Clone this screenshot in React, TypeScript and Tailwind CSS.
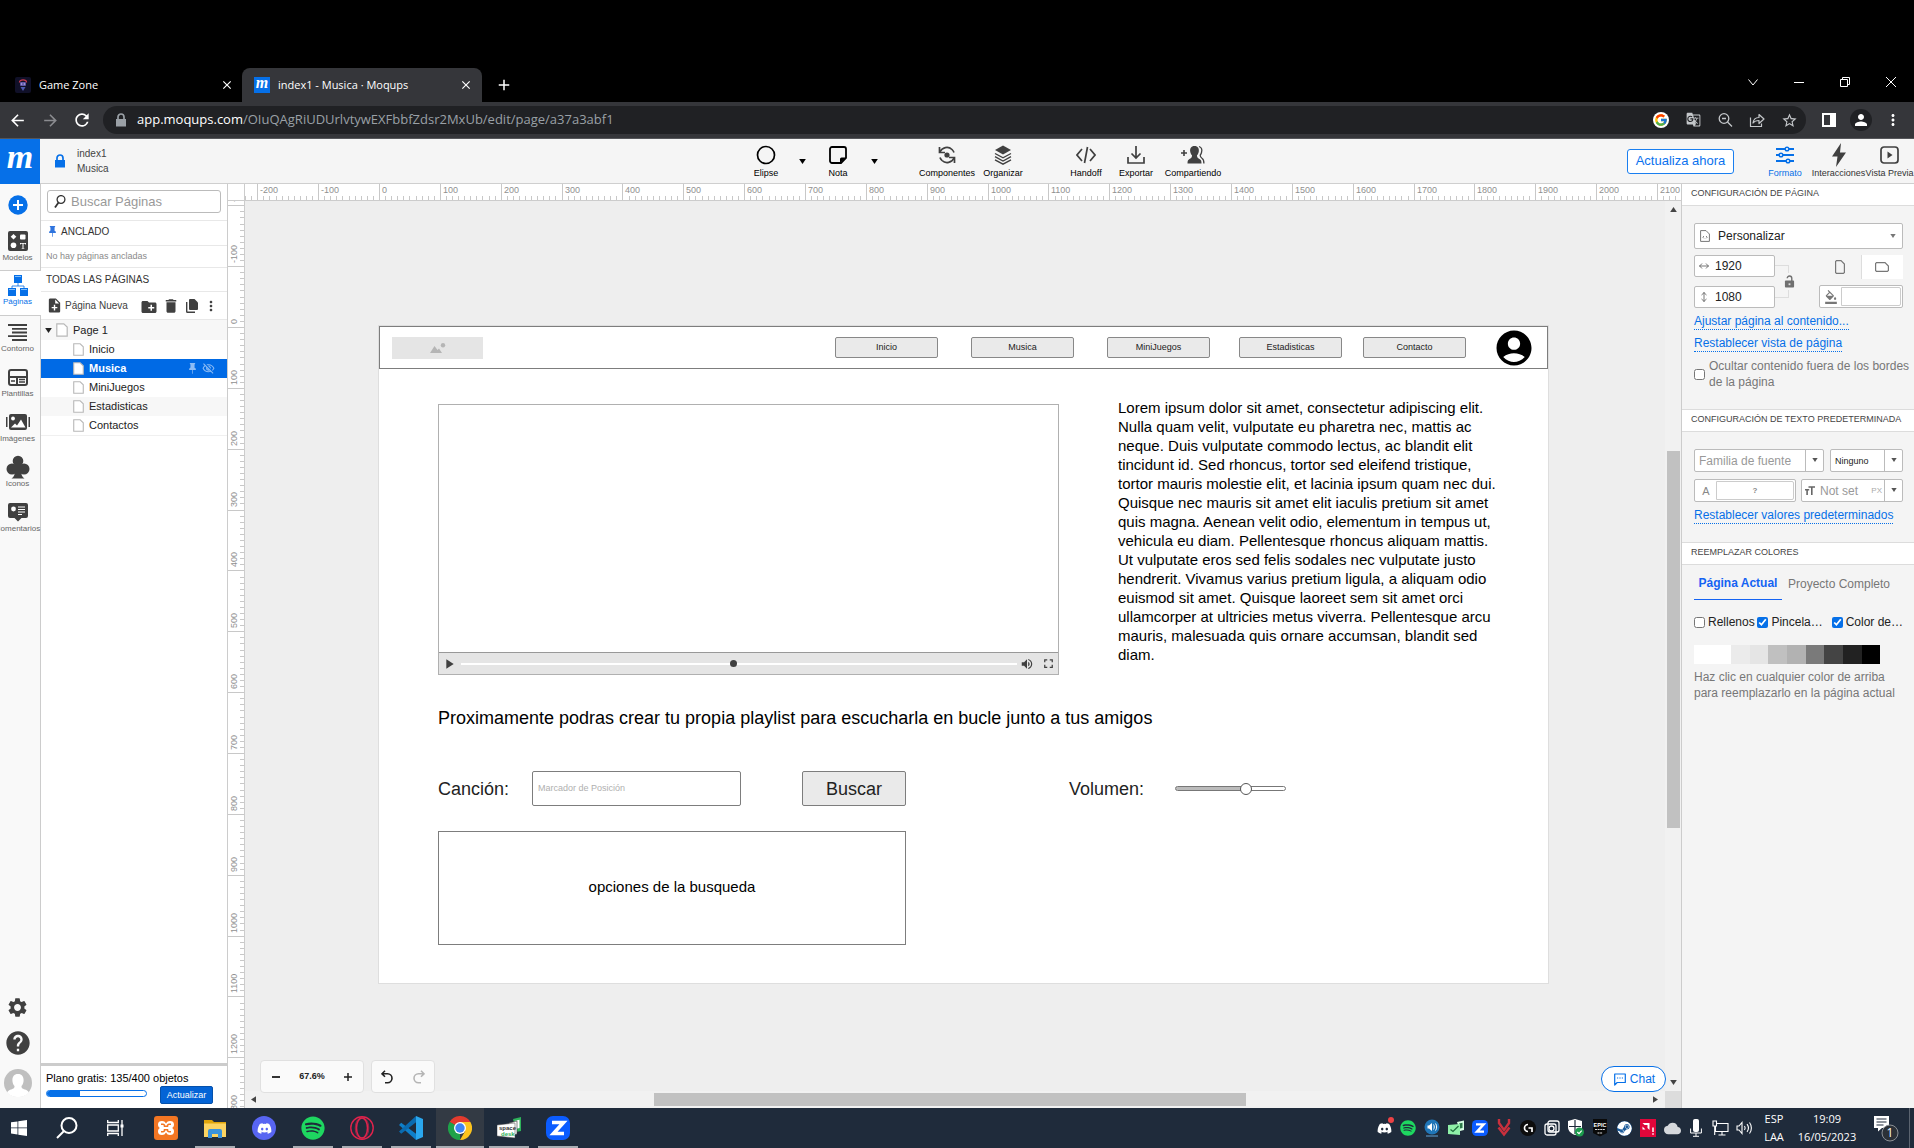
import React from "react";
import {
  MdAccountCircle, MdSettings, MdHelp, MdDelete, MdNoteAdd, MdCreateNewFolder, MdMoreVert,
  MdOutlineVisibilityOff, MdVolumeUp, MdFullscreen, MdPlayArrow, MdFormatColorFill,
  MdFormatSize, MdArrowBack, MdArrowForward, MdRefresh, MdStarBorder, MdGTranslate, MdClose, MdAdd, MdPerson,
  MdCloud,
} from "react-icons/md";
import { FcGoogle } from "react-icons/fc";
import { FaDiscord, FaSpotify, FaSteam } from "react-icons/fa";
import { BsPinFill } from "react-icons/bs";

/* ---------- small drawings ---------- */

type P = { className?: string };

const Caret = ({ className = "" }: P) => (
  <svg viewBox="0 0 8 6" className={className} fill="currentColor" aria-hidden="true"><path d="M0 0h8L4 6z" /></svg>
);

const Lock = ({ className = "" }: P) => (
  <svg viewBox="0 0 12 14" className={className} fill="currentColor" aria-hidden="true">
    <path d="M1 6h10v7.500H1z" /><path d="M3 6.500V4a3 3 0 016 0v2.500" fill="none" stroke="currentColor" strokeWidth="1.700" />
  </svg>
);

const Sheet = ({ className = "" }: P) => (
  <svg viewBox="0 0 12 14" className={className} fill="#fff" stroke="#b8b8b8" strokeWidth="1.2" aria-hidden="true">
    <path d="M.8.8h7L11.2 4v9.2H.8z" />
  </svg>
);

const GameFavicon = () => (
  <svg viewBox="0 0 16 16" className="size-4" aria-hidden="true">
    <rect width="16" height="16" rx="2" fill="#101028" />
    <path d="M4.500 5.500c0-3.500 7-3.500 7 0" fill="none" stroke="#c8384f" strokeWidth="1.300" />
    <rect x="5" y="5" width="6" height="4" rx="1" fill="#5f55a8" />
    <path d="M5.500 10l2.500 4 2.500-4z" fill="#4c58b0" />
    <path d="M6 7h1.200M8.800 7H10" stroke="#d8d4f4" />
  </svg>
);

const ZoomOut = () => (
  <svg viewBox="0 0 16 16" className="size-4" fill="none" stroke="#c4c7ca" strokeWidth="1.3" aria-hidden="true">
    <circle cx="7" cy="6.500" r="4.800" /><path d="M10.500 10l4.500 4.500M5 6.500h4" />
  </svg>
);
const Share = () => (
  <svg viewBox="0 0 16 16" className="size-4" fill="none" stroke="#c4c7ca" strokeWidth="1.2" strokeLinejoin="round" aria-hidden="true">
    <path d="M1.500 5.500v9h11v-3" /><path d="M4 11c.5-4 3-5.500 6-5.500V2.500l5 4.500-5 4.500V8.500C7.500 8.500 5.500 9 4 11z" />
  </svg>
);
const SidePanel = () => (
  <svg viewBox="0 0 16 16" className="size-4" aria-hidden="true"><path fill="#fff" fillRule="evenodd" d="M1 1h14v14H1zM3 3v10h6V3z" /></svg>
);

const Models = () => (
  <svg viewBox="0 0 20 20" className="size-5" aria-hidden="true">
    <rect width="20" height="20" rx="2" fill="#404040" />
    <path d="M5.500 3l2.800 2.800-2.800 2.800L2.700 5.800z" fill="#fff" /><rect x="12" y="3.500" width="5.500" height="5" rx="1" fill="#fff" />
    <circle cx="5.500" cy="14.200" r="2.800" fill="#fff" />
    <path d="M12 12h6v1.600h-.6l-.4-.8h-1.500v4.200l1 .4v.4h-3v-.4l1-.4v-4.200H13l-.4.800H12z" fill="#fff" />
  </svg>
);
const Pages = () => (
  <svg viewBox="0 0 20 21" className="h-[21px] w-5" fill="#0670e8" aria-hidden="true">
    <path d="M6 0h8v8H6z" /><path d="M0 13h8v8H0zM12 13h8v8h-8z" />
    <path d="M10 8v3M4 13v-2h12v2" fill="none" stroke="#0670e8" strokeWidth=".8" />
    <path d="M7 1.500h6M1 14.500h6M13 14.500h6" stroke="#9fd0ff" strokeWidth=".8" />
  </svg>
);
const Outline = () => (
  <svg viewBox="0 0 20 17" className="h-[17px] w-5" stroke="#404040" strokeWidth="1.8" aria-hidden="true">
    <path d="M0 1h19M4 4.800h15M4 8.500h15M0 12.200h19M4 16h15" />
  </svg>
);
const Templates = () => (
  <svg viewBox="0 0 20 17" className="h-[17px] w-5" aria-hidden="true">
    <rect x="1" y="1" width="18" height="15" rx="2" fill="none" stroke="#404040" strokeWidth="2" />
    <path d="M1 8h18M9 8v8" stroke="#404040" strokeWidth="2" /><path d="M3 12h4M11 10.500h6M11 13h6" stroke="#404040" strokeWidth="1.500" />
  </svg>
);
const Images = () => (
  <svg viewBox="0 0 24 16" className="h-4 w-6" fill="#404040" aria-hidden="true">
    <rect x="3" y="0" width="18" height="16" rx="2" /><path d="M0 3h1.500v10H0zM22.500 3H24v10h-1.500z" />
    <circle cx="7" cy="4.500" r="1.900" fill="#fff" /><path d="M5 13.500l4-4 2 2 4-6 4.500 8z" fill="#fff" />
  </svg>
);
const Club = () => (
  <svg viewBox="0 0 24 24" className="size-6" fill="#404040" aria-hidden="true">
    <circle cx="12" cy="6" r="5.300" /><circle cx="6" cy="14" r="5.500" /><circle cx="18" cy="14" r="5.500" />
    <path d="M9 9h6v8c.5 3 1 5 3.500 6.500h-13C8 22 8.500 20 9 17z" />
  </svg>
);
const Comments = () => (
  <svg viewBox="0 0 20 19" className="h-[19px] w-5" aria-hidden="true">
    <path d="M2 0h16a2 2 0 012 2v11a2 2 0 01-2 2h-4.500L10 18.500 6.500 15H2a2 2 0 01-2-2V2a2 2 0 012-2z" fill="#404040" />
    <circle cx="5.500" cy="6" r="2.400" fill="#fff" /><path d="M10 4h7M10 6.500h7M10 9h7M10 11.500h4" stroke="#fff" />
  </svg>
);
const Plus = () => (
  <svg viewBox="0 0 20 20" className="size-5" aria-hidden="true">
    <circle cx="10" cy="10" r="9.700" fill="#0670e8" /><path d="M10 5v10M5 10h10" stroke="#fff" strokeWidth="2" />
  </svg>
);
const Avatar = () => (
  <svg viewBox="0 0 28 28" className="size-7" aria-hidden="true">
    <circle cx="14" cy="14" r="14" fill="#bfbfbf" />
    <path d="M14 5c4.500 0 6 3.500 5.500 7.500-.3 2.500-1 3.500-2 4.500 0 2 .5 2.500 3.500 3.500 2 .8 3.300 1.700 3.800 3A14 14 0 0114 28a14 14 0 01-10.800-4.500c.5-1.300 1.800-2.200 3.800-3 3-1 3.500-1.500 3.500-3.500-1-1-1.700-2-2-4.500C8 8.500 9.500 5 14 5z" fill="#fff" />
  </svg>
);
const Copies = () => (
  <svg viewBox="0 0 12 14" className="h-3.5 w-3" fill="#404040" aria-hidden="true">
    <path d="M4 0h4.500L12 3.500V10a1 1 0 01-1 1H4a1 1 0 01-1-1V1a1 1 0 011-1z" /><path d="M.7 3v9.500a.8.8 0 00.8.8H9" fill="none" stroke="#404040" strokeWidth="1.400" />
  </svg>
);

const Ellipse = () => <svg viewBox="0 0 20 20" className="size-5" aria-hidden="true"><circle cx="10" cy="10" r="8.500" fill="none" stroke="#000" strokeWidth="1.700" /></svg>;
const Note = () => (
  <svg viewBox="0 0 20 20" className="size-5" aria-hidden="true">
    <path d="M4 2h12a2 2 0 012 2v9l-5 5H4a2 2 0 01-2-2V4a2 2 0 012-2z" fill="none" stroke="#000" strokeWidth="1.800" />
    <path d="M12 18v-4a1.500 1.500 0 011.500-1.500H18z" />
  </svg>
);
const Components = () => (
  <svg viewBox="0 0 20 20" className="size-5" fill="none" stroke="#404040" strokeWidth="1.700" aria-hidden="true">
    <circle cx="10" cy="10" r="2.600" fill="#404040" stroke="none" />
    <path d="M3 7A7.500 7.500 0 0115 4.500q1.500 1.500 2 3M17 13a7.500 7.500 0 01-12 2.500Q3.500 14 3 12.500" /><path d="M2.500 2v5.500H8M17.500 18v-5.500H12" />
  </svg>
);
const Layers = () => (
  <svg viewBox="0 0 20 20" className="size-5" aria-hidden="true">
    <path d="M10 .5l8 4.500-8 4.500L2 5z" fill="#404040" />
    <path d="M2 8.500l8 4.300 8-4.300M2 11.700L10 16l8-4.300M2 14.900l8 4.300 8-4.300" fill="none" stroke="#404040" strokeWidth="1.400" />
  </svg>
);
const Code = () => (
  <svg viewBox="0 0 20 20" className="size-5" fill="none" stroke="#404040" strokeWidth="1.700" aria-hidden="true">
    <path d="M6 4L1 10l5 6M14 4l5 6-5 6M11.500 2l-3 16" />
  </svg>
);
const Export = () => (
  <svg viewBox="0 0 20 20" className="size-5" fill="none" stroke="#404040" strokeWidth="1.700" aria-hidden="true">
    <path d="M10 1v12M5.500 8.500L10 13l4.500-4.500M2 12v6h16v-6" />
  </svg>
);
const People = () => (
  <svg viewBox="0 0 24 20" className="h-5 w-6" fill="#404040" aria-hidden="true">
    <path d="M13.500 1c3.500 0 4.800 2.500 4.300 5.500-.3 2-1 3-1.800 3.800 0 2.200.5 2.700 2.500 3.700 1.500.8 2 2 2 4.500H6.500c0-2.500.5-3.700 2-4.500 2-1 2.500-1.500 2.500-3.700C10.200 9.500 9.500 8.500 9.200 6.500 8.700 3.500 10 1 13.500 1z" />
    <path d="M18 1.500c2.500.8 3.200 3.500 2.500 6-.3 1.300-.8 2-1.300 2.700 0 1.800.5 2.300 2 3.300 1.200.8 1.700 2 1.700 5" fill="none" stroke="#404040" strokeWidth="1.300" />
    <path d="M0 8h6M3 5v6" stroke="#404040" strokeWidth="1.600" />
  </svg>
);
const Sliders = () => (
  <svg viewBox="0 0 18 18" className="size-[18px]" fill="#fff" stroke="#0670e8" strokeWidth="2" aria-hidden="true">
    <path d="M0 3h18M0 9h18M0 15h18" /><circle cx="11" cy="3" r="1.800" strokeWidth="1.500" /><circle cx="5" cy="9" r="1.800" strokeWidth="1.500" /><circle cx="12" cy="15" r="1.800" strokeWidth="1.500" />
  </svg>
);
const Bolt = () => <svg viewBox="0 0 16 24" className="h-6 w-4" fill="#404040" aria-hidden="true"><path d="M10 0L1 13.500h5.500L5 24l10-14.500H9z" /></svg>;
const Preview = () => (
  <svg viewBox="0 0 20 18" className="h-[18px] w-5" aria-hidden="true">
    <rect x="1" y="1" width="17" height="16" rx="3" fill="none" stroke="#404040" strokeWidth="1.700" /><path d="M7.500 5.500v7l5-3.500z" fill="#404040" />
  </svg>
);
const DocCode = () => (
  <svg viewBox="0 0 10 12" className="h-3 w-[10px]" fill="none" stroke="#777" aria-hidden="true">
    <path d="M1 .6h5L9.400 4v7.400H.6V.6z" strokeLinejoin="round" /><path d="M4 6L2.800 7.200 4 8.400M6 6l1.200 1.200L6 8.400" strokeWidth=".9" />
  </svg>
);
const Unlock = () => (
  <svg viewBox="0 0 12 14" className="h-[13px] w-[11px]" aria-hidden="true">
    <rect x="1" y="6" width="10" height="7.500" rx="1" fill="#707070" /><path d="M3.500 3.500a2.500 2.500 0 015 0V7" fill="none" stroke="#707070" strokeWidth="1.500" /><rect x="5" y="9" width="2" height="2" fill="#ddd" />
  </svg>
);
const ChatIcon = () => (
  <svg viewBox="0 0 12 13" className="h-[13px] w-3" fill="none" stroke="#0670e8" strokeWidth="1.200" aria-hidden="true">
    <path d="M.7 12V1h10.600v8.500H3.200z" strokeLinejoin="round" /><path d="M3 5h1.200M5.400 5h1.200M7.800 5H9" />
  </svg>
);

/* ---------- taskbar drawings ---------- */

const Win = () => (
  <svg viewBox="0 0 16 16" className="size-4" fill="#fff" aria-hidden="true"><path d="M0 2.300l6.500-.9v6.100H0zM7.300 1.300L16 0v7.500H7.300zM0 8.300h6.500v6.200L0 13.600zM7.300 8.300H16V16l-8.700-1.300z" /></svg>
);
const WinSearch = () => (
  <svg viewBox="0 0 22 22" className="size-[22px]" fill="none" stroke="#fff" strokeWidth="2" aria-hidden="true"><circle cx="13" cy="8.500" r="7.500" /><path d="M8 14L1 21" /></svg>
);
const TaskView = () => (
  <svg viewBox="0 0 17 16" className="h-4 w-[17px]" fill="none" stroke="#fff" strokeWidth="1.300" aria-hidden="true">
    <path d="M.7 0v2.500h10.600V0M.7 16v-2.500h10.600V16M.7 5h10.600v6H.7zM15 0v16" /><path d="M13.500 4.500h3v3h-3z" fill="#fff" stroke="none" />
  </svg>
);
const Xampp = () => (
  <svg viewBox="0 0 24 24" className="size-6" aria-hidden="true">
    <rect width="24" height="24" rx="3" fill="#f37623" />
    <path d="M4 8.500C4 6 5.500 5 8 5c2 0 3 .8 4 2.500C13 5.800 14 5 16 5c2.500 0 4 1 4 3.500 0 1.800-.8 2.800-2 3.500 1.200.7 2 1.700 2 3.500 0 2.500-1.500 3.500-4 3.500-2 0-3-.8-4-2.500-1 1.700-2 2.500-4 2.500-2.500 0-4-1-4-3.500 0-1.800.8-2.800 2-3.500-1.200-.7-2-1.700-2-3.500z" fill="#fff" />
    <path d="M7 8.300h2c1 0 1.500.7 1.500 2H13.500c0-1.300.5-2 1.500-2h2M7 15.700h2c1 0 1.500-.7 1.500-2H13.500c0 1.300.5 2 1.500 2h2" fill="none" stroke="#f37623" strokeWidth="1.500" />
  </svg>
);
const Explorer = () => (
  <svg viewBox="0 0 22 19" className="h-[19px] w-[22px]" aria-hidden="true">
    <path d="M0 1h8l2 2h12v15H0z" fill="#e0a50c" /><path d="M0 4.500h22V18H0z" fill="#fcd462" />
    <path d="M4 19v-7a2 2 0 012-2h10a2 2 0 012 2v7h-4v-4H8v4z" fill="#3a93dc" />
  </svg>
);
const DiscordApp = () => <span className="flex size-6 items-center justify-center rounded-full bg-[#5865f2] text-white"><FaDiscord size={15} /></span>;
const Opera = () => (
  <svg viewBox="0 0 24 24" className="size-6" fill="none" stroke="#e0234c" aria-hidden="true">
    <circle cx="12" cy="12" r="11.200" strokeWidth="1.400" /><ellipse cx="12" cy="12" rx="5.500" ry="10" strokeWidth="1.500" />
    <path d="M15 2.500c5 4 5 15 0 19M9 2.500c-5 4-5 15 0 19" strokeWidth=".7" />
  </svg>
);
const VsCode = () => (
  <svg viewBox="0 0 24 24" className="size-6" aria-hidden="true">
    <path d="M17 24L0 9l2.200-2.200L18 18.500z" fill="#0f7fc9" /><path d="M17 0L0 15.500 2.200 17.700 18 5.500z" fill="#0a6bb0" />
    <path d="M17 0l7 3v18l-7 3z" fill="#2aa7ee" />
  </svg>
);
const Chrome = () => (
  <svg viewBox="0 0 24 24" className="size-6" aria-hidden="true">
    <path d="M12 12L1.600 6A12 12 0 0122.400 6z" fill="#e33b2e" /><path d="M12 12l0 12A12 12 0 011.600 6z" fill="#1fa24a" />
    <path d="M12 6h10.400A12 12 0 0112 24l5.200-9z" fill="#fcc31e" /><path d="M1.600 6L6.800 15l3 2.500L12 12z" fill="#1fa24a" />
    <circle cx="12" cy="12" r="6" fill="#fff" /><circle cx="12" cy="12" r="4.700" fill="#3f85f4" />
  </svg>
);
const SpaceDesk = () => (
  <svg viewBox="0 0 24 24" className="size-6" aria-hidden="true">
    <path d="M16 3l8-2v14l-5 1z" fill="#2eb25a" /><path d="M17.500 5l5-1.300V12l-3 .7z" fill="#fff" />
    <path d="M12 7l8-2v13l-8 3z" fill="#fff" stroke="#333" strokeWidth=".6" /><path d="M0 9l18-2v15L0 20z" fill="#fff" stroke="#444" strokeWidth=".5" />
    <text x="2" y="14" fontSize="6" fontWeight="700" fill="#333" fontFamily="Liberation Sans, sans-serif">space</text>
    <text x="4" y="19.500" fontSize="6" fontWeight="700" fill="#2eb25a" fontFamily="Liberation Sans, sans-serif">desk</text>
  </svg>
);
const ZApp = ({ className = "" }: P) => (
  <svg viewBox="0 0 24 24" className={className} aria-hidden="true">
    <rect width="24" height="24" rx="7" fill="#0b5cff" /><path d="M6 6.500h11.500L7.500 17.500H18" fill="none" stroke="#fff" strokeWidth="3.600" />
  </svg>
);

const TrayDiscord = () => (
  <span className="relative flex text-white"><FaDiscord size={15} /><span className="absolute -top-1 -right-0.5 size-1.5 rounded-full bg-[#ed4245]" /></span>
);
const TraySound = () => (
  <svg viewBox="0 0 16 18" className="h-[18px] w-4" aria-hidden="true">
    <circle cx="8" cy="8" r="7.500" fill="#2076b8" /><path d="M3.500 6.500h1.500L8 4v8L5 9.500H3.500z" fill="#fff" />
    <path d="M9.500 5.500c1 1.500 1 3.500 0 5M11.500 4.500c1.500 2 1.500 5 0 7" stroke="#fff" fill="none" /><path d="M2 17h12" stroke="#4d7ea6" strokeWidth="1.500" />
  </svg>
);
const TraySpace = () => (
  <svg viewBox="0 0 16 16" className="size-4" aria-hidden="true">
    <path d="M9 2l7-1.500V10l-4 1z" fill="#d7ffe3" /><path d="M11 3.500l3.500-.8V8l-2.500.6z" fill="#2d7a4a" />
    <path d="M0 5l12-1v11L0 14z" fill="#8ff0a8" /><path d="M2.500 9.500l2.500 2L10.500 6" fill="none" stroke="#1f6d3c" strokeWidth="1.300" />
  </svg>
);
const TrayV = () => (
  <svg viewBox="0 0 14 18" className="h-[18px] w-3.5" fill="none" stroke="#c9303d" strokeWidth="2.400" aria-hidden="true"><path d="M2 0v4l5 7 5-7V0" /><path d="M1.500 8.500L7 15.500l5.500-7" /></svg>
);
const TrayG = () => (
  <svg viewBox="0 0 16 16" className="size-4" aria-hidden="true"><circle cx="8" cy="8" r="8" fill="#0d0d0d" /><path d="M8 4.500a3.500 3.500 0 100 7M8.500 8h3.500v4" fill="none" stroke="#fff" strokeWidth="1.700" /></svg>
);
const TrayNet = () => (
  <svg viewBox="0 0 16 16" className="size-4" fill="none" stroke="#fff" strokeWidth="1.300" aria-hidden="true">
    <rect x="4" y="1" width="11" height="11" rx="2" /><rect x="1" y="4" width="11" height="11" rx="2" /><circle cx="7.500" cy="8.500" r="2.500" />
  </svg>
);
const TrayShield = () => (
  <svg viewBox="0 0 16 18" className="h-[18px] w-4" aria-hidden="true">
    <path d="M7 0l7 2v6c0 4-3 6.500-7 8-4-1.500-7-4-7-8V2z" fill="#fff" /><path d="M7 1v14M1 7.500h12" stroke="#1f2b3b" strokeWidth="1.200" />
    <circle cx="11.500" cy="13" r="4.500" fill="#1c9c4d" /><path d="M9.300 13l1.700 1.600 2.700-3" fill="none" stroke="#fff" strokeWidth="1.200" />
  </svg>
);
const TrayEpic = () => (
  <svg viewBox="0 0 14 18" className="h-[18px] w-3.5" aria-hidden="true">
    <path d="M0 0h14v14l-7 3.500L0 14z" fill="#0a0a0a" />
    <text x="7" y="7.500" textAnchor="middle" fontSize="5.500" fontWeight="700" fill="#fff" fontFamily="Liberation Sans, sans-serif">EPIC</text>
    <path d="M2 10.500h10M4.500 14h5" stroke="#ddd" strokeWidth="1.200" strokeDasharray="2 .6" />
  </svg>
);
const TrayAmd = () => (
  <svg viewBox="0 0 16 18" className="h-[18px] w-4" aria-hidden="true">
    <rect width="16" height="18" fill="#e0063a" /><path d="M2.500 4h7v7L7.500 9V6H4.500zM2.500 7.500v3h3l-1.500-1.500z" fill="#fff" /><path d="M13 8.500v4.500M13 14.200v1.600" stroke="#fff" strokeWidth="1.500" />
  </svg>
);
const TrayMic = () => (
  <svg viewBox="0 0 12 18" className="h-[18px] w-3" fill="none" stroke="#fff" aria-hidden="true"><rect x="3.500" y=".5" width="5" height="12" rx="1" fill="#fff" /><path d="M.6 9.500v4.500h10.800V9.500M6 14v3M3 17.300h6" /></svg>
);
const TrayPc = () => (
  <svg viewBox="0 0 17 16" className="h-4 w-[17px]" fill="none" stroke="#fff" strokeWidth="1.100" aria-hidden="true"><path d="M5 3.500h11v8H3.500V6M10 11.500V15M6.500 15h7M1 1h3.500v5H1zM2.700 6v9" /></svg>
);
const TrayVol = () => (
  <svg viewBox="0 0 17 14" className="h-3.5 w-[17px]" fill="none" stroke="#fff" strokeWidth="1.100" aria-hidden="true"><path d="M1 5h2l3-3.500v11L3 9H1zM8.500 5c.8 1.200.8 2.800 0 4M11 3.200c1.700 2.200 1.700 5.400 0 7.600M13.500 1.500c2.500 3.200 2.500 7.800 0 11" /></svg>
);
const Notice = () => (
  <svg viewBox="0 0 26 28" className="h-7 w-[26px]" aria-hidden="true">
    <path d="M1 2h15v12H9l-4 3.500V14H1z" fill="#fff" /><path d="M3.500 5h10M3.500 8h10M3.500 11h7" stroke="#1f2b3b" strokeWidth="1.200" />
    <circle cx="17" cy="19" r="8" fill="#2b3138" stroke="#8b9096" />
    <text x="17" y="23" textAnchor="middle" fontSize="12" fill="#fff" fontFamily="Open Sans, sans-serif">1</text>
  </svg>
);

/* ---------- rulers ---------- */

const UNITS = 0.6086;

function ticks(origin: number, from: number, to: number) {
  const list: { v: number; at: number }[] = [];
  for (let v = from; v <= to; v += 10) list.push({ v, at: Math.round(origin + v * UNITS) });
  return list;
}

const HRuler = () => (
  <svg className="h-4 w-full" aria-hidden="true">
    {ticks(134, -220, 2130).map(({ v, at }) => (
      <g key={v}>
        <rect x={at} y={v % 100 ? 12 : 0} width="1" height="16" fill="#c8c8c8" />
        {v % 100 === 0 && <text x={at + 3} y="9" fontSize="9" fill="#909090">{v}</text>}
      </g>
    ))}
  </svg>
);

const VRuler = () => (
  <svg className="h-full w-4" aria-hidden="true">
    {ticks(126, -200, 1310).map(({ v, at }) => (
      <g key={v}>
        <rect x={v % 100 ? 12 : 0} y={at} width="16" height="1" fill="#c8c8c8" />
        {v % 100 === 0 && <text transform={"translate(9 " + (at - 3) + ") rotate(-90)"} fontSize="9" fill="#909090">{v}</text>}
      </g>
    ))}
  </svg>
);

/* ---------- browser ---------- */

const Browser = () => (
  <div className="shrink-0 bg-black font-['Open_Sans',sans-serif] text-[11px] text-white">
    <div className="flex h-[102px] items-end">
      <div className="flex h-[34px] w-[242px] items-center pl-[15px]">
        <GameFavicon /><span className="ml-2">Game Zone</span>
        <button aria-label="Cerrar Game Zone" className="mr-2 ml-auto"><MdClose size={14} /></button>
      </div>
      <div className="flex h-[34px] w-60 items-center rounded-t-lg bg-[#35363a] pl-3">
        <span className="flex size-4 items-center justify-center bg-[#0670e8] pb-1 font-['Liberation_Serif',serif] text-base leading-4 font-bold italic">m</span>
        <span className="ml-2">index1 - Musica · Moqups</span>
        <button aria-label="Cerrar index1" className="mr-[9px] ml-auto"><MdClose size={14} /></button>
      </div>
      <button aria-label="Nueva pestaña" className="flex h-[34px] w-11 items-center justify-center"><MdAdd size={18} /></button>
      <div className="ml-auto flex h-10 items-center">
        <button aria-label="Buscar pestañas" className="flex w-[46px] justify-center"><svg viewBox="0 0 10 7" className="h-[7px] w-2.5" fill="none" stroke="#fff"><path d="M.5.5L5 6 9.500.5" /></svg></button>
        <button aria-label="Minimizar" className="flex w-[46px] justify-center"><span className="h-px w-2.5 bg-white" /></button>
        <button aria-label="Restaurar" className="flex w-[46px] justify-center"><svg viewBox="0 0 10 10" className="size-2.5" fill="none" stroke="#fff"><path d="M.5 2.500h7v7h-7zM2.500 2.500v-2h7v7h-2" /></svg></button>
        <button aria-label="Cerrar ventana" className="flex w-[46px] justify-center"><svg viewBox="0 0 10 10" className="size-2.5" fill="none" stroke="#fff"><path d="M0 0l10 10M10 0L0 10" /></svg></button>
      </div>
    </div>
    <div className="flex h-[37px] items-center border-b border-[#55565a] bg-[#35363a]">
      <button aria-label="Atrás" className="flex w-[34px] justify-center"><MdArrowBack size={19} /></button>
      <button aria-label="Adelante" className="flex w-8 justify-center text-[#8b8c90]"><MdArrowForward size={19} /></button>
      <button aria-label="Recargar" className="flex w-8 justify-center"><MdRefresh size={20} /></button>
      <div className="ml-[5px] flex h-7 flex-1 items-center rounded-full bg-[#202124] pr-px pl-3">
        <Lock className="h-3.5 w-3 text-[#9aa0a6]" />
        <a href="#url" className="ml-2.5 text-[13px]">app.moqups.com<span className="text-[#9aa0a6]">/OIuQAgRiUDUrlvtywEXFbbfZdsr2MxUb/edit/page/a37a3abf1</span></a>
        <div className="ml-auto flex text-[#c4c7ca]">
          <button aria-label="Google" className="flex w-8 justify-center"><span className="flex size-4 items-center justify-center rounded-full bg-white"><FcGoogle size={14} /></span></button>
          <button aria-label="Traducir" className="flex w-8 justify-center"><MdGTranslate size={15} /></button>
          <button aria-label="Reducir" className="flex w-8 justify-center"><ZoomOut /></button>
          <button aria-label="Compartir" className="flex w-8 justify-center"><Share /></button>
          <button aria-label="Favorito" className="flex w-8 justify-center"><MdStarBorder size={17} /></button>
        </div>
      </div>
      <button aria-label="Panel lateral" className="ml-[7px] flex w-8 justify-center"><SidePanel /></button>
      <button aria-label="Perfil" className="flex w-8 justify-center"><span className="flex size-[22px] items-center justify-center rounded-full bg-[#202124]"><MdPerson size={18} /></span></button>
      <button aria-label="Menú" className="mr-[5px] flex w-8 justify-center"><MdMoreVert size={18} /></button>
    </div>
  </div>
);

/* ---------- application header ---------- */

const Tool = ({ label, icon, className }: { label: string; icon: React.ReactNode; className: string }) => (
  <button className={"flex flex-col items-center whitespace-nowrap text-[9px] leading-3 " + className}>
    <span className="flex h-6 items-center">{icon}</span>{label}
  </button>
);

const AppHeader = () => (
  <header className="flex h-[45px] shrink-0 items-center border-b border-[#cfcfcf] bg-[#f5f5f5] text-black">
    <div className="flex w-[742px] shrink-0 items-center self-stretch">
      <a href="#inicio" aria-label="Moqups" className="flex h-[45px] w-10 items-center justify-center bg-[#0670e8] pb-2 font-['Liberation_Serif',serif] text-[34px] leading-8 font-bold text-white italic">m</a>
      <Lock className="ml-3.5 h-3.5 w-3 text-[#0670e8]" />
      <div className="ml-[11px] text-[10px] leading-[15px] text-[#444]"><div>index1</div><div>Musica</div></div>
    </div>
    <Tool label="Elipse" icon={<Ellipse />} className="w-12" />
    <button aria-label="Más formas" className="flex w-6 justify-center"><Caret className="h-[5px] w-[7px]" /></button>
    <Tool label="Nota" icon={<Note />} className="w-12" />
    <button aria-label="Más notas" className="flex w-6 justify-center"><Caret className="h-[5px] w-[7px]" /></button>
    <Tool label="Componentes" icon={<Components />} className="ml-[31px] w-[60px]" />
    <Tool label="Organizar" icon={<Layers />} className="w-[52px]" />
    <Tool label="Handoff" icon={<Code />} className="ml-[33px] w-12" />
    <Tool label="Exportar" icon={<Export />} className="w-[52px]" />
    <Tool label="Compartiendo" icon={<People />} className="w-[62px]" />
    <button className="ml-auto h-[25px] w-[107px] rounded-[3px] border border-[#1a7ff0] bg-white pb-px text-[13px] text-[#0b72ee]">Actualiza ahora</button>
    <Tool label="Formato" icon={<Sliders />} className="ml-6 w-[54px] text-[#0670e8]" />
    <Tool label="Interacciones" icon={<Bolt />} className="w-[53px] text-[#333]" />
    <Tool label="Vista Previa" icon={<Preview />} className="w-[49px] text-[#333]" />
  </header>
);

/* ---------- left side ---------- */

const railItems = [
  { label: "Modelos", icon: <Models /> },
  { label: "Páginas", icon: <Pages />, on: true },
  { label: "Contorno", icon: <Outline /> },
  { label: "Plantillas", icon: <Templates /> },
  { label: "Imágenes", icon: <Images /> },
  { label: "Iconos", icon: <Club /> },
  { label: "Comentarios", icon: <Comments /> },
];

const Rail = () => (
  <nav className="flex w-[41px] shrink-0 flex-col overflow-hidden bg-[#f9f9f9]">
    <button aria-label="Añadir" className="flex h-[41px] w-full items-center border-r border-[#ccc] pl-2"><Plus /></button>
    {railItems.map((r) => (
      <button
        key={r.label}
        className={
          r.on
            ? "flex h-[46px] w-full flex-col items-center border-y border-[#ccc] bg-white pt-0.5 pr-1.5 text-[8px] leading-[10px] text-[#0670e8]"
            : "flex h-[45px] w-full flex-col items-center border-r border-[#ccc] pt-1 pr-[5px] text-[8px] leading-[10px] text-[#666]"
        }
      >
        <span className="flex h-6 items-center">{r.icon}</span>{r.label}
      </button>
    ))}
    <div className="flex flex-1 flex-col items-center justify-end gap-1.5 border-r border-[#ccc] pr-[5px] pb-[11px] text-[#404040]">
      <button aria-label="Ajustes" className="flex size-7 items-center justify-center"><MdSettings size={23} /></button>
      <button aria-label="Ayuda" className="flex size-8 items-center justify-center"><MdHelp size={28} /></button>
      <button aria-label="Cuenta" className="mt-1"><Avatar /></button>
    </div>
  </nav>
);

const tree = [
  { name: "Inicio", cls: "bg-white" },
  { name: "Musica", cls: "bg-[#006ae5] font-bold text-white" },
  { name: "MiniJuegos", cls: "bg-white" },
  { name: "Estadisticas", cls: "bg-[#f7f7f7]" },
  { name: "Contactos", cls: "bg-white" },
];

const PagesPanel = () => (
  <aside className="flex w-[187px] shrink-0 flex-col border-r border-[#ccc] bg-white text-[10px] text-[#333]">
    <div className="px-1.5 pt-1.5 pb-[7px]">
      <label className="flex h-[23px] items-center rounded-[3px] border border-[#bbb] px-1.5">
        <svg viewBox="0 0 12 13" className="h-[13px] w-3 shrink-0" fill="none" stroke="#333" strokeWidth="1.300" aria-hidden="true"><circle cx="7" cy="4.500" r="3.900" /><path d="M4.500 7.500L1 12.500" strokeWidth="1.800" /></svg>
        <input aria-label="Buscar Páginas" placeholder="Buscar Páginas" className="ml-[5px] w-full text-[13px] outline-none placeholder:text-[#999]" />
      </label>
    </div>
    <div className="flex h-[25px] items-center border-t border-[#e8e8e8] pb-1 pl-1.5"><BsPinFill size={11} className="mr-[3px] text-[#2f74de]" />ANCLADO</div>
    <div className="h-[22px] border-t border-[#e8e8e8] pt-1 pl-[5px] text-[9px] text-[#8a8a8a]">No hay páginas ancladas</div>
    <div className="h-6 border-t border-[#e8e8e8] pt-1 pl-[5px]">TODAS LAS PÁGINAS</div>
    <div className="flex h-[29px] items-center border-y border-[#e8e8e8] pl-[5px] text-[#404040]">
      <button className="flex items-center gap-0.5"><MdNoteAdd size={17} />Página Nueva</button>
      <button aria-label="Nueva carpeta" className="mt-0.5 ml-3"><MdCreateNewFolder size={18} /></button>
      <button aria-label="Eliminar" className="ml-1"><MdDelete size={18} /></button>
      <button aria-label="Duplicar" className="ml-1.5"><Copies /></button>
      <button aria-label="Más" className="ml-[5px]"><MdMoreVert size={16} /></button>
    </div>
    <div className="text-[11px] text-[#222]">
      <button className="flex h-5 w-full items-center bg-[#f7f7f7] pl-1"><Caret className="h-[5px] w-[7px]" /><Sheet className="ml-1 h-3.5 w-3" /><span className="ml-[5px]">Page 1</span></button>
      {tree.map((t) => (
        <div key={t.name} className={"flex h-[19px] items-center pl-8 " + t.cls}>
          <button className="flex items-center"><Sheet className="h-[13px] w-[11px]" /><span className="ml-[5px]">{t.name}</span></button>
          {t.name === "Musica" && (
            <span className="mr-3 ml-auto flex items-center gap-1 text-[#8cbcf5]"><BsPinFill size={11} /><MdOutlineVisibilityOff size={13} /></span>
          )}
        </div>
      ))}
      <div className="border-t border-[#f0f0f0]" />
    </div>
    <div className="mt-auto h-[45px] border-t-[3px] border-[#ccc] px-[5px] pt-1 text-black">
      <div className="text-[11px] leading-4">Plano gratis: 135/400 objetos</div>
      <div className="flex items-start">
        <div className="mt-1 h-[7px] w-[101px] overflow-hidden rounded-full border border-[#0670e8]"><div className="h-full w-1/3 bg-[#0670e8]" /></div>
        <button className="ml-[13px] h-[18px] w-[53px] rounded-[2px] border border-[#0551ab] bg-[#0464d6] text-[9px] leading-4 text-white">Actualizar</button>
      </div>
    </div>
  </aside>
);

/* ---------- design page ---------- */

const mockBtn = "h-[21px] w-[103px] rounded-[2px] border border-[#888] bg-[#eaeaea] pb-px text-[9px] leading-4 text-[#222]";

const lorem = `Lorem ipsum dolor sit amet, consectetur adipiscing elit.
Nulla quam velit, vulputate eu pharetra nec, mattis ac
neque. Duis vulputate commodo lectus, ac blandit elit
tincidunt id. Sed rhoncus, tortor sed eleifend tristique,
tortor mauris molestie elit, et lacinia ipsum quam nec dui.
Quisque nec mauris sit amet elit iaculis pretium sit amet
quis magna. Aenean velit odio, elementum in tempus ut,
vehicula eu diam. Pellentesque rhoncus aliquam mattis.
Ut vulputate eros sed felis sodales nec vulputate justo
hendrerit. Vivamus varius pretium ligula, a aliquam odio
euismod sit amet. Quisque laoreet sem sit amet orci
ullamcorper at ultricies metus viverra. Pellentesque arcu
mauris, malesuada quis ornare accumsan, blandit sed
diam.`;

const DesignPage = () => (
  <article className="mt-[125px] ml-[134px] w-[1169px] bg-white pb-[38px] text-black outline outline-[#dedede]">
    <div className="flex h-[43px] items-center border border-[#7d7d7d] pl-3">
      <div className="flex h-[22px] w-[91px] items-center justify-center bg-[#e5e5e5]">
        <svg viewBox="0 0 16 10" className="h-2.5 w-4" fill="#b5b5b5" aria-hidden="true"><path d="M0 10l4.500-7 3 4L9 5.500l3 4.500z" /><circle cx="13" cy="2.200" r="2.200" /></svg>
      </div>
      <button className={mockBtn + " ml-[352px]"}>Inicio</button>
      <button className={mockBtn + " ml-[33px]"}>Musica</button>
      <button className={mockBtn + " ml-[33px]"}>MiniJuegos</button>
      <button className={mockBtn + " ml-[29px]"}>Estadisticas</button>
      <button className={mockBtn + " ml-[21px]"}>Contacto</button>
      <MdAccountCircle size={42} className="ml-[27px]" />
    </div>
    <div className="flex pt-[29px] pl-[59px]">
      <div className="mt-1.5 flex h-[271px] w-[621px] flex-col justify-end border border-[#b0b0b0]">
        <div className="flex h-[22px] items-center border-t border-[#999] bg-[#e5e5e5] pl-0.5 text-[#404040]">
          <button aria-label="Reproducir"><MdPlayArrow size={16} /></button>
          <input
            type="range" aria-label="Posición" defaultValue={49} step="any"
            className="mr-[3px] ml-1 h-0.5 flex-1 appearance-none bg-white [&::-webkit-slider-thumb]:size-[7px] [&::-webkit-slider-thumb]:appearance-none [&::-webkit-slider-thumb]:rounded-full [&::-webkit-slider-thumb]:bg-[#404040]"
          />
          <button aria-label="Sonido"><MdVolumeUp size={14} /></button>
          <button aria-label="Pantalla completa" className="mr-0.5 ml-[7px]"><MdFullscreen size={15} /></button>
        </div>
      </div>
      <p className="ml-[59px] text-[15px] leading-[19px] whitespace-pre">{lorem}</p>
    </div>
    <div className="pl-[59px]">
      <h2 className="mt-[31px] text-lg leading-6">Proximamente podras crear tu propia playlist para escucharla en bucle junto a tus amigos</h2>
      <div className="mt-[41px] flex h-[35px] items-center text-lg text-[#222]">
        <label htmlFor="cancion" className="w-[94px]">Canción:</label>
        <input id="cancion" placeholder="Marcador de Posición" className="h-full w-[209px] rounded-[2px] border border-[#7d7d7d] px-[5px] pb-0.5 text-[9px] placeholder:text-[#b0b0b0]" />
        <button className="ml-[61px] h-full w-[104px] rounded-[2px] border border-[#7d7d7d] bg-[#eaeaea]">Buscar</button>
        <label htmlFor="volumen" className="ml-[163px] w-[106px]">Volumen:</label>
        <input
          id="volumen" type="range" defaultValue={66}
          className="h-[5px] w-[111px] appearance-none rounded-full border border-[#777] bg-linear-to-r from-[#bbb] from-65% to-white to-65% [&::-webkit-slider-thumb]:size-3 [&::-webkit-slider-thumb]:appearance-none [&::-webkit-slider-thumb]:rounded-full [&::-webkit-slider-thumb]:border [&::-webkit-slider-thumb]:border-[#555] [&::-webkit-slider-thumb]:bg-white"
        />
      </div>
      <div className="mt-[25px] flex h-[114px] w-[468px] items-center justify-center border border-[#7d7d7d] pb-0.5 text-[15px]">opciones de la busqueda</div>
    </div>
  </article>
);

const Workspace = () => (
  <section className="flex min-w-0 flex-1 flex-col">
    <div className="flex h-[17px] shrink-0 border-b border-[#ccc] bg-white">
      <div className="w-[17px] shrink-0 border-r border-[#ccc]" />
      <HRuler />
    </div>
    <div className="flex min-h-0 flex-1">
      <div className="w-[17px] shrink-0 overflow-hidden border-r border-[#ccc] bg-white"><VRuler /></div>
      <div className="relative flex min-w-0 flex-1 flex-col">
        <div className="flex min-h-0 flex-1">
          <main className="min-w-0 flex-1 overflow-hidden bg-[#eee]"><DesignPage /></main>
          <div className="flex w-4 shrink-0 flex-col items-center bg-[#f1f1f1] pt-1.5 pb-1.5 text-[#444]">
            <Caret className="h-[5px] w-[7px] rotate-180" />
            <div className="mt-[239px] h-[377px] w-[13px] bg-[#c1c1c1]" />
            <Caret className="mt-auto h-[5px] w-[7px]" />
          </div>
        </div>
        <div className="flex h-[17px] shrink-0 items-center bg-[#f1f1f1] text-[#444]">
          <Caret className="ml-[5px] h-[5px] w-[7px] rotate-90" />
          <div className="ml-[397px] h-[13px] w-[592px] bg-[#c1c1c1]" />
          <Caret className="mr-1.5 ml-auto h-[5px] w-[7px] -rotate-90" />
          <div className="h-full w-4 bg-[#dcdcdc]" />
        </div>
        <div className="absolute bottom-[15px] left-[15px] flex gap-[7px] text-[#222]">
          <div className="flex h-[33px] w-[104px] items-center justify-between rounded-[4px] border border-[#e0e0e0] bg-[#fafafa] px-[9px] text-[9px] font-bold">
            <button aria-label="Alejar" className="flex size-3 items-center justify-center"><span className="h-0.5 w-2 bg-[#333]" /></button>
            <span>67.6%</span>
            <button aria-label="Acercar" className="flex size-3 items-center justify-center"><svg viewBox="0 0 8 8" className="size-2" stroke="#222" strokeWidth="1.500"><path d="M4 0v8M0 4h8" /></svg></button>
          </div>
          <div className="flex h-[33px] w-16 items-center justify-between rounded-[4px] border border-[#e0e0e0] bg-[#fafafa] px-[9px]">
            <button aria-label="Deshacer"><svg viewBox="0 0 12 14" className="h-3.5 w-3" fill="none" stroke="#222" strokeWidth="1.600"><path d="M4 .8L1 3.800l3 3M1 3.800h5.500a4.500 4.500 0 010 9H4" /></svg></button>
            <button aria-label="Rehacer"><svg viewBox="0 0 12 14" className="h-3.5 w-3" fill="none" stroke="#b5b5b5" strokeWidth="1.600"><path d="M8 .8l3 3-3 3M11 3.800H5.500a4.500 4.500 0 000 9H8" /></svg></button>
          </div>
        </div>
        <button className="absolute right-[15px] bottom-4 flex h-[26px] w-[65px] items-center justify-center gap-1 rounded-full border border-[#0670e8] bg-white pl-0.5 text-xs text-[#0670e8]"><ChatIcon />Chat</button>
      </div>
    </div>
  </section>
);

/* ---------- right inspector ---------- */

const Title = ({ children }: { children: React.ReactNode }) => (
  <h3 className="h-[22px] border-b border-[#dcdcdc] bg-white pl-[9px] text-[9px] leading-[18px] text-[#444]">{children}</h3>
);

const link = "border-b border-dotted border-[#0670e8] text-[#0670e8]";
const field = "rounded-[2px] border border-[#bbb] bg-white";
const swatches = [
  "w-[37px] bg-white", "w-[19px] bg-[#ebebeb]", "w-[18px] bg-[#e5e5e5]", "w-[19px] bg-[#c0c0c0]", "w-[19px] bg-[#b2b2b2]",
  "w-[18px] bg-[#7a7a7a]", "w-[19px] bg-[#444]", "w-[19px] bg-[#222]", "w-[18px] bg-black",
];

const Inspector = () => (
  <aside className="w-[233px] shrink-0 overflow-hidden border-l border-[#ccc] bg-[#f4f4f4] text-xs leading-4 text-[#222]">
    <Title>CONFIGURACIÓN DE PÁGINA</Title>
    <div className="h-[203px] pt-[17px] pr-[11px] pl-3">
      <div className={"relative flex h-[26px] items-center pl-[5px] " + field}>
        <DocCode />
        <select aria-label="Tamaño de página" className="ml-1.5 h-full flex-1 appearance-none pl-[2px] outline-none"><option>Personalizar</option></select>
        <Caret className="pointer-events-none absolute right-1.5 h-1 w-1.5 text-[#777]" />
      </div>
      <div className="mt-1.5 flex">
        <div className="flex flex-col gap-[9px]">
          <label className={"flex h-[22px] w-[81px] items-center pl-1 " + field}>
            <svg viewBox="0 0 10 6" className="h-1.5 w-2.5" fill="none" stroke="#777" aria-hidden="true"><path d="M0 3h10M3 .5L.7 3 3 5.500M7 .5L9.300 3 7 5.500" /></svg>
            <input aria-label="Ancho" defaultValue="1920" className="ml-1.5 w-12" />
          </label>
          <label className={"flex h-[22px] w-[81px] items-center pl-1 " + field}>
            <svg viewBox="0 0 10 10" className="size-2.5" fill="none" stroke="#777" aria-hidden="true"><path d="M5 0v10M2.500 3L5 .7 7.500 3M2.500 7L5 9.300 7.500 7" /></svg>
            <input aria-label="Alto" defaultValue="1080" className="ml-1.5 w-12" />
          </label>
        </div>
        <div className="mt-2.5 flex w-5 flex-col items-center">
          <span className="h-2 w-3.5 self-start border-t border-r border-[#ddd]" />
          <span className="my-0.5 ml-2"><Unlock /></span>
          <span className="h-2 w-3.5 self-start border-r border-b border-[#ddd]" />
        </div>
        <div className="ml-auto flex w-[84px] flex-col gap-1.5">
          <div className="flex h-6">
            <button aria-label="Vertical" className="flex flex-1 items-center justify-center"><svg viewBox="0 0 10 14" className="h-3.5 w-2.5" fill="none" stroke="#777" strokeWidth="1.200"><path d="M1.500.6H6L9.400 4v8.500l-1 .9h-7l-.8-.9v-11z" /></svg></button>
            <button aria-label="Horizontal" className="flex flex-1 items-center justify-center border-l border-[#ddd] bg-white"><svg viewBox="0 0 14 10" className="h-2.5 w-3.5" fill="none" stroke="#777" strokeWidth="1.200"><path d="M1.500.6H10L13.400 4v4.500l-1 .9h-11l-.8-.9v-7z" /></svg></button>
          </div>
          <button aria-label="Color de fondo" className={"flex h-[23px] items-center p-px " + field}><MdFormatColorFill size={14} className="mx-[3px] text-[#777]" /><span className="h-full flex-1 rounded-r-[2px] border border-[#ccc]" /></button>
        </div>
      </div>
      <div className="mt-[5px] flex flex-col items-start gap-[5px]">
        <a href="#ajustar" className={link}>Ajustar página al contenido...</a>
        <a href="#vista" className={link}>Restablecer vista de página</a>
      </div>
      <label className="mt-1.5 flex items-center gap-1 whitespace-nowrap text-[#777]">
        <input type="checkbox" className="size-[11px] shrink-0" />
        <span>Ocultar contenido fuera de los bordes<br />de la página</span>
      </label>
    </div>
    <div className="border-t border-[#dcdcdc]"><Title>CONFIGURACIÓN DE TEXTO PREDETERMINADA</Title></div>
    <div className="h-[110px] pt-[17px] pr-[11px] pl-3">
      <div className="flex justify-between">
        <div className={"flex h-[23px] w-[130px] " + field}>
          <input aria-label="Familia de fuente" placeholder="Familia de fuente" className="w-0 flex-1 pl-1 placeholder:text-[#999]" />
          <button aria-label="Abrir fuentes" className="flex w-[18px] justify-center border-l border-[#bbb] pt-2 text-[#555]"><Caret className="h-1 w-1.5" /></button>
        </div>
        <div className={"relative flex h-[23px] w-[73px] " + field}>
          <select aria-label="Estilo" className="w-full appearance-none pl-1 text-[9px] outline-none"><option>Ninguno</option></select>
          <span className="pointer-events-none absolute inset-y-0 right-0 flex w-[18px] justify-center border-l border-[#bbb] pt-2 text-[#555]"><Caret className="h-1 w-1.5" /></span>
        </div>
      </div>
      <div className="mt-[7px] flex justify-between">
        <button className={"flex h-[23px] w-[102px] items-center p-px text-[#888] " + field}>
          <span className="w-5 text-center text-[11px]">A</span>
          <span className="flex h-full flex-1 items-center justify-center rounded-r-[2px] border border-[#ccc] text-[8px] font-bold">?</span>
        </button>
        <div className={"flex h-[23px] w-[102px] items-center " + field}>
          <svg viewBox="0 0 10 9" className="ml-[3px] h-[9px] w-2.5" fill="none" stroke="#666" strokeWidth="1.600" aria-hidden="true"><path d="M3.500 1H10M6.800 1v8M0 3.800h4.200M2.100 3.800V9" /></svg>
          <input aria-label="Tamaño" placeholder="Not set" className="ml-[5px] w-0 flex-1 placeholder:text-[#999]" />
          <span className="mr-0.5 text-[8px] text-[#aaa]">PX</span>
          <button aria-label="Abrir tamaños" className="flex w-[18px] justify-center self-stretch border-l border-[#bbb] pt-2 text-[#555]"><Caret className="h-1 w-1.5" /></button>
        </div>
      </div>
      <div className="mt-[5px] flex"><a href="#valores" className={link}>Restablecer valores predeterminados</a></div>
    </div>
    <div className="border-t border-[#dcdcdc]"><Title>REEMPLAZAR COLORES</Title></div>
    <div className="pt-2.5 pr-[11px] pl-3">
      <div className="flex">
        <button className="h-[25px] w-[88px] border-b border-[#1463f3] pb-2 font-bold text-[#1463f3]">Página Actual</button>
        <button className="ml-1.5 h-[25px] pb-2 text-[#777]">Proyecto Completo</button>
      </div>
      <div className="mt-3.5 flex items-center whitespace-nowrap">
        <label className="flex w-16 items-center gap-[3px]"><input type="checkbox" className="size-[11px]" />Rellenos</label>
        <label className="flex w-[75px] items-center gap-[3px]"><input type="checkbox" defaultChecked className="size-[11px] accent-[#0670e8]" />Pincela…</label>
        <label className="flex items-center gap-[3px]"><input type="checkbox" defaultChecked className="size-[11px] accent-[#0670e8]" />Color de…</label>
      </div>
      <div className="mt-[15px] flex h-[19px]">{swatches.map((s) => <button key={s} aria-label="Reemplazar color" className={s} />)}</div>
      <p className="mt-[5px] whitespace-nowrap text-[#777]">Haz clic en cualquier color de arriba<br />para reemplazarlo en la página actual</p>
    </div>
  </aside>
);

/* ---------- taskbar ---------- */

const apps = [
  { n: "XAMPP", i: <Xampp />, c: "" },
  { n: "Explorador", i: <Explorer />, c: "w-10" },
  { n: "Discord", i: <DiscordApp />, c: "" },
  { n: "Spotify", i: <FaSpotify size={24} className="text-[#1ed760]" />, c: "w-10" },
  { n: "Opera", i: <Opera />, c: "w-10" },
  { n: "Visual Studio Code", i: <VsCode />, c: "w-10" },
  { n: "Chrome", i: <Chrome />, c: "w-12" },
  { n: "spacedesk", i: <SpaceDesk />, c: "w-10" },
  { n: "Zoom", i: <ZApp className="size-6" />, c: "w-10" },
];

const tray = [
  <TrayDiscord />, <FaSpotify size={16} className="text-[#1ed760]" />, <TraySound />, <TraySpace />, <ZApp className="size-4" />, <TrayV />,
  <TrayG />, <TrayNet />, <TrayShield />, <TrayEpic />, <FaSteam size={15} className="rounded-full bg-[#1b5b9b] text-white" />, <TrayAmd />,
  <MdCloud size={17} className="text-[#d5d8dc]" />, <TrayMic />, <TrayPc />, <TrayVol />,
];

const Taskbar = () => (
  <footer className="flex h-10 shrink-0 items-center bg-[#1f2b3b] font-['Open_Sans',sans-serif] text-[11px] leading-[18px] text-white">
    <button aria-label="Inicio de Windows" className="flex w-[38px] justify-center"><Win /></button>
    <button aria-label="Buscar en Windows" className="ml-[5px] flex w-12 justify-center"><WinSearch /></button>
    <button aria-label="Vista de tareas" className="flex w-12 justify-center"><TaskView /></button>
    <div className="ml-[3px] flex gap-px self-stretch">
      {apps.map((a) => (
        <button key={a.n} aria-label={a.n} className={"flex w-12 flex-col items-center " + (a.n === "Chrome" ? "bg-[#333a44]" : "")}>
          <span className="flex flex-1 items-center">{a.i}</span>
          <span className={a.c ? "-mt-0.5 h-0.5 bg-[#a9adb3] " + a.c : ""} />
        </button>
      ))}
    </div>
    <div className="ml-auto flex items-center">
      {tray.map((t, k) => <span key={k} className="flex w-6 justify-center">{t}</span>)}
      <div className="w-9 text-center">ESP<br />LAA</div>
      <div className="w-[70px] text-center">19:09<br />16/05/2023</div>
      <button aria-label="Notificaciones" className="ml-[11px] flex w-[26px]"><Notice /></button>
      <span className="mr-1 ml-[10px] h-10 w-px bg-[#5b6470]" />
    </div>
  </footer>
);

export default function App() {
  return (
    <div className="flex h-screen flex-col bg-white font-['Liberation_Sans',Arial,sans-serif]">
      <Browser />
      <AppHeader />
      <div className="flex min-h-0 flex-1">
        <Rail />
        <PagesPanel />
        <Workspace />
        <Inspector />
      </div>
      <Taskbar />
    </div>
  );
}
